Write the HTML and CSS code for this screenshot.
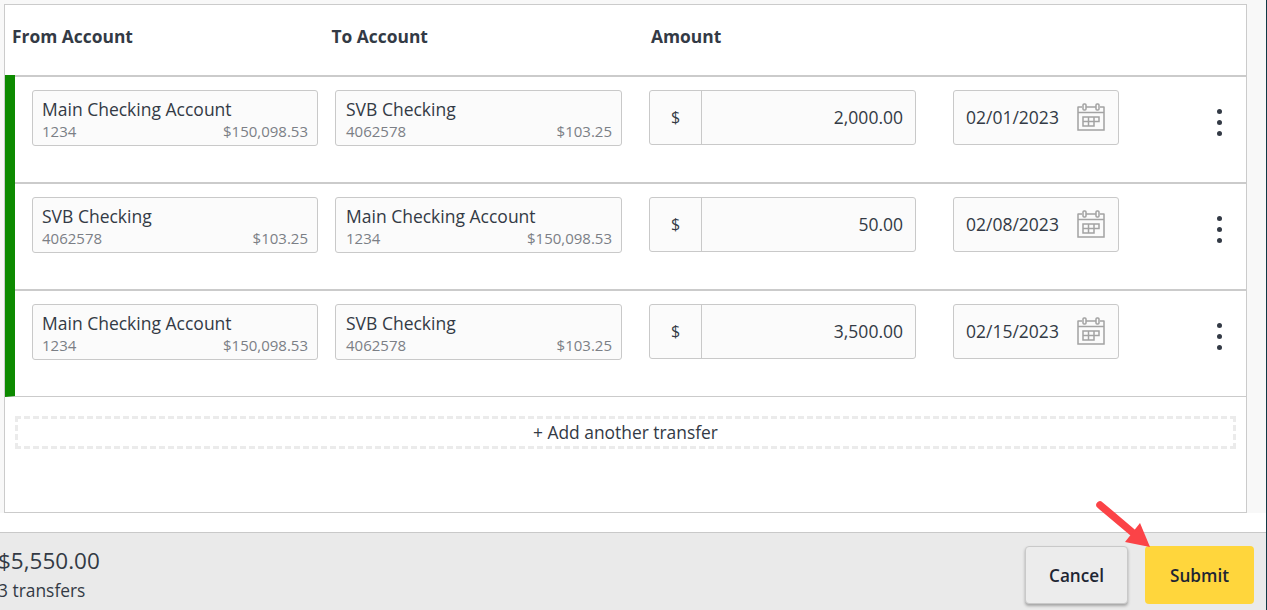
FILE: index.html
```html
<!DOCTYPE html>
<html lang="en">
<head>
<meta charset="utf-8">
<title>Transfers</title>
<link rel="stylesheet" href="styles.css">
</head>
<body>
<svg width="0" height="0" class="defs" aria-hidden="true">
  <symbol id="cal" viewBox="0 0 28 28">
    <g fill="none" stroke="#a3a3a3" stroke-width="1.5">
      <path d="M1 4h4M9 4h10M23 4h4M1 3.500v23.500h26V3.500M1 9.500h26"/>
      <rect x="6" y="1" width="3" height="6" rx="1"/>
      <rect x="19" y="1" width="3" height="6" rx="1"/>
      <path d="M6 14h16v4.500h-5v4.500H6zM6 18.500h11M11.500 14v9M17 14v4.500"/>
    </g>
  </symbol>
</svg>
<main class="panel">
  <div class="head">
    <div class="head-cell">From Account</div>
    <div class="head-cell">To Account</div>
    <div class="head-cell">Amount</div>
  </div>
  <div class="rows">
    <div class="row">
      <div class="acct acct-from"><div class="acct-name">Main Checking Account</div><div class="acct-sub"><span>1234</span><span>$150,098.53</span></div></div>
      <div class="acct acct-to"><div class="acct-name">SVB Checking</div><div class="acct-sub"><span>4062578</span><span>$103.25</span></div></div>
      <div class="amount"><span class="cur">$</span><span class="val">2,000.00</span></div>
      <div class="date"><span>02/01/2023</span><svg class="cal"><use href="#cal"/></svg></div>
      <div class="more"><i></i><i></i><i></i></div>
    </div>
    <div class="row">
      <div class="acct acct-from"><div class="acct-name">SVB Checking</div><div class="acct-sub"><span>4062578</span><span>$103.25</span></div></div>
      <div class="acct acct-to"><div class="acct-name">Main Checking Account</div><div class="acct-sub"><span>1234</span><span>$150,098.53</span></div></div>
      <div class="amount"><span class="cur">$</span><span class="val">50.00</span></div>
      <div class="date"><span>02/08/2023</span><svg class="cal"><use href="#cal"/></svg></div>
      <div class="more"><i></i><i></i><i></i></div>
    </div>
    <div class="row">
      <div class="acct acct-from"><div class="acct-name">Main Checking Account</div><div class="acct-sub"><span>1234</span><span>$150,098.53</span></div></div>
      <div class="acct acct-to"><div class="acct-name">SVB Checking</div><div class="acct-sub"><span>4062578</span><span>$103.25</span></div></div>
      <div class="amount"><span class="cur">$</span><span class="val">3,500.00</span></div>
      <div class="date"><span>02/15/2023</span><svg class="cal"><use href="#cal"/></svg></div>
      <div class="more"><i></i><i></i><i></i></div>
    </div>
  </div>
  <div class="add">+ Add another transfer</div>
</main>
<footer class="foot">
  <div class="total">
    <div class="total-amt">$5,550.00</div>
    <div class="total-count">3 transfers</div>
  </div>
  <div class="actions">
    <button class="btn btn-cancel">Cancel</button>
    <button class="btn btn-submit">Submit</button>
  </div>
</footer>
<svg class="arrow" width="70" height="60" viewBox="0 0 70 60" aria-hidden="true">
  <path d="M5 5L37 32" stroke="#fb4347" stroke-width="7.500" stroke-linecap="round" fill="none"/>
  <path d="M55 47L30 42L45 23z" fill="#fb4347"/>
</svg>
</body>
</html>
```
FILE: styles.css
```css
* { box-sizing: border-box; }
html, body { margin: 0; height: 610px; overflow: hidden; }
body {
  position: relative;
  background: #fff;
  font-family: "Open Sans", sans-serif;
  color: #333a45;
  display: flex;
  flex-direction: column;
  padding-top: 4px;
}
body::before {
  content: "";
  position: absolute;
  left: 0; right: 0; top: 0;
  height: 513px;
  background: #f8f8f8;
}
body::after {
  content: "";
  position: absolute;
  right: 0; top: 0; bottom: 0;
  width: 1px;
  background: #103a46;
}
.defs { position: absolute; }
.panel {
  position: relative;
  margin-left: 4px;
  width: 1243px;
  height: 509px;
  background: #fff;
  border: 1px solid #cbcbcb;
}
.head {
  display: flex;
  height: 70px;
  align-items: center;
  padding: 0 0 8px 7px;
  font-size: 17.4px;
  font-weight: 700;
  color: #333a45;
}
.head-cell { width: 319.500px; }
.rows { border-left: 10px solid #0d8a00; border-bottom: 1px solid #cbcbcb; }
.row {
  display: flex;
  align-items: flex-start;
  height: 107px;
  padding-top: 13px;
  padding-left: 17px;
  border-top: 2px solid #cbcbcb;
}
.acct, .amount, .date {
  background: #fbfbfb;
  border: 1px solid #c9c9c9;
  border-radius: 3px;
}
.acct { height: 56px; padding: 6px 9px; }
.acct-from { width: 286px; margin-right: 17px; }
.acct-to { width: 287px; margin-right: 27px; padding-left: 10px; }
.acct-name { font-size: 17.500px; line-height: 24px; }
.acct-sub {
  display: flex;
  justify-content: space-between;
  font-size: 15px;
  line-height: 20px;
  color: #7b7f86;
}
.amount { width: 267px; height: 55px; margin-right: 37px; display: flex; font-size: 17.500px; }
.cur {
  width: 52px;
  border-right: 1px solid #c9c9c9;
  display: flex;
  align-items: center;
  justify-content: center;
  padding-bottom: 2px;
  font-size: 16px;
}
.val { flex: 1; display: flex; align-items: center; justify-content: flex-end; padding: 0 12px 2px 0; }
.date {
  width: 166px;
  height: 55px;
  display: flex;
  align-items: center;
  justify-content: space-between;
  padding: 0 13px 2px 12px;
  font-size: 17.500px;
}
.cal { width: 28px; height: 28px; }
.more {
  display: flex;
  flex-direction: column;
  gap: 6px;
  margin: 19px 0 0 98px;
}
.more i { display: block; width: 5px; height: 5px; border-radius: 50%; background: #333a45; }
.add {
  margin: 19px 0 0 10px;
  width: 1221px;
  height: 33px;
  border: 3px dashed #ebebeb;
  padding-bottom: 2px;
  display: flex;
  align-items: center;
  justify-content: center;
  font-size: 17.400px;
}
.foot {
  margin-top: 19px;
  height: 78px;
  background: #eaeaea;
  border-top: 1px solid #c9c9c9;
  display: flex;
  justify-content: space-between;
  align-items: flex-start;
  padding-right: 13px;
}
.total { margin-left: -2px; padding-top: 12px; }
.total-amt { font-size: 22.500px; line-height: 32px; }
.total-count { font-size: 17.400px; line-height: 24px; margin-top: 1px; }
.actions { display: flex; gap: 17px; padding-top: 13px; }
.btn {
  height: 58px;
  font-family: inherit;
  font-size: 17.200px;
  font-weight: 600;
  color: #1e2533;
  border-radius: 4px;
  border: 0;
}
.btn-cancel {
  width: 103px;
  background: #ececec;
  border: 1px solid #c9c9c9;
  box-shadow: 0 2px 3px rgba(0,0,0,.3);
}
.btn-submit { width: 109px; background: #ffd63c; }
.arrow { position: absolute; left: 1095px; top: 500px; }
```
